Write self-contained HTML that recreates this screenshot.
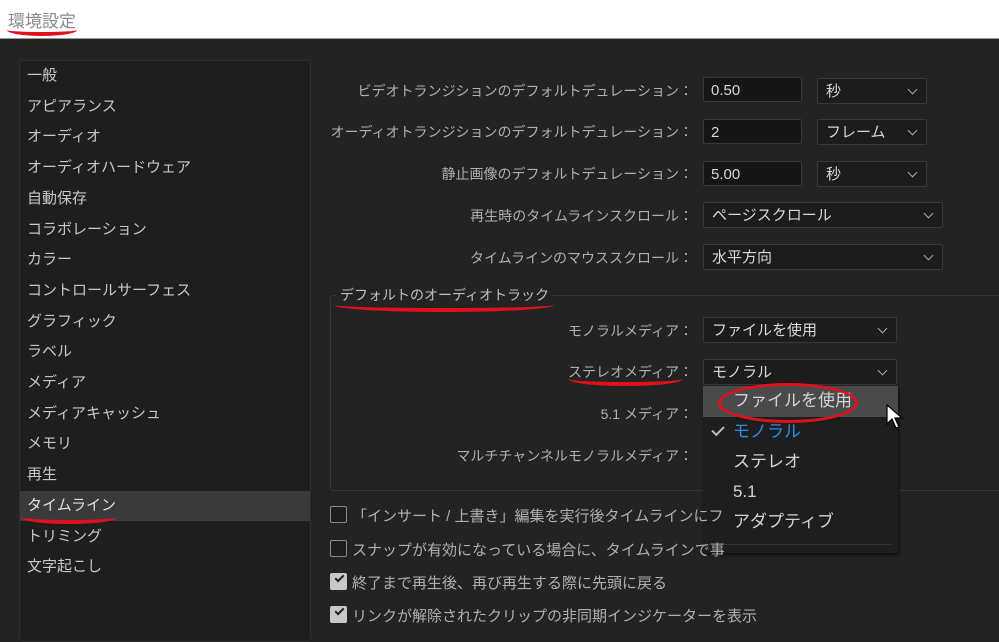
<!DOCTYPE html>
<html><head><meta charset="utf-8"><style>
body{margin:0;width:999px;height:632px;background:#232323;overflow:hidden;position:relative;font-family:"Liberation Sans","Noto Sans CJK JP",sans-serif;font-size:15px;color:#c8c8c8}
.a{position:absolute;white-space:nowrap}
.top{left:0;top:0;width:999px;height:38px;background:#fff;border-bottom:1px solid #999}
.lp{left:19px;top:60px;width:290px;height:580px;background:#1e1e1e;border:1px solid #2e2e2e;border-radius:3px}
.li{position:absolute;left:7px;height:30px;line-height:30px;width:283px}
.lbl{right:306px;text-align:right;color:#b0b0b0;font-size:14px}
.in{background:#161616;border:1px solid #383838;border-radius:2px;height:25px;line-height:25px;padding-left:7px;box-sizing:border-box;color:#d8d8d8}
.dd{background:#1c1c1c;border:1px solid #383838;border-radius:2px;height:26px;line-height:25px;padding-left:8px;box-sizing:border-box;color:#d8d8d8}
.dd:after{content:"";position:absolute;right:10px;top:7px;width:6px;height:6px;border-right:1.3px solid #aaa;border-bottom:1.3px solid #aaa;transform:rotate(45deg)}
.cb{width:15px;height:15px;border:1.5px solid #8a8a8a;border-radius:2px;background:#1e1e1e;left:330px}
.cb.c{background:#c8c8c8;border-color:#c8c8c8}
.red{position:absolute;border-bottom:4px solid #e0101c;border-radius:50%}
.mi{position:absolute;left:30px;height:30px;line-height:30px;font-size:17px;color:#d4d4d4}
.ct{left:352px;color:#b0b0b0}
</style></head><body>
<div class="a top"></div>
<div class="a" style="left:8px;top:7px;font-size:17px;color:#8a8a8a">環境設定</div>
<div class="red" style="left:7px;top:24px;width:70px;height:8px"></div>

<div class="a lp">
<div class="li" style="top:0">一般</div>
<div class="li" style="top:31px">アピアランス</div>
<div class="li" style="top:61px">オーディオ</div>
<div class="li" style="top:92px">オーディオハードウェア</div>
<div class="li" style="top:123px">自動保存</div>
<div class="li" style="top:154px">コラボレーション</div>
<div class="li" style="top:184px">カラー</div>
<div class="li" style="top:215px">コントロールサーフェス</div>
<div class="li" style="top:246px">グラフィック</div>
<div class="li" style="top:276px">ラベル</div>
<div class="li" style="top:307px">メディア</div>
<div class="li" style="top:338px">メディアキャッシュ</div>
<div class="li" style="top:368px">メモリ</div>
<div class="li" style="top:399px">再生</div>
<div class="li" style="top:430px;left:0;padding-left:7px;background:#3a3a3a;color:#e0e0e0">タイムライン</div>
<div class="li" style="top:461px">トリミング</div>
<div class="li" style="top:491px">文字起こし</div>
</div>
<div class="red" style="left:20px;top:510px;width:98px;height:10px"></div>

<div class="a lbl" style="top:81px">ビデオトランジションのデフォルトデュレーション：</div>
<div class="a in" style="left:703px;top:77px;width:99px">0.50</div>
<div class="a dd" style="left:817px;top:78px;width:110px">秒</div>
<div class="a lbl" style="top:122px">オーディオトランジションのデフォルトデュレーション：</div>
<div class="a in" style="left:703px;top:119px;width:99px">2</div>
<div class="a dd" style="left:817px;top:119px;width:110px">フレーム</div>
<div class="a lbl" style="top:164px">静止画像のデフォルトデュレーション：</div>
<div class="a in" style="left:703px;top:161px;width:99px">5.00</div>
<div class="a dd" style="left:817px;top:161px;width:110px">秒</div>
<div class="a lbl" style="top:206px">再生時のタイムラインスクロール：</div>
<div class="a dd" style="left:703px;top:202px;width:240px">ページスクロール</div>
<div class="a lbl" style="top:248px">タイムラインのマウススクロール：</div>
<div class="a dd" style="left:703px;top:244px;width:240px">水平方向</div>

<div class="a" style="left:330px;top:295px;width:680px;height:194px;border:1px solid #363636;border-radius:3px"></div>
<div class="a" style="left:336px;top:285px;padding:0 4px;background:#232323;color:#c0c0c0;font-size:14px">デフォルトのオーディオトラック</div>
<div class="red" style="left:334px;top:298px;width:220px;height:10px"></div>

<div class="a lbl" style="top:321px">モノラルメディア：</div>
<div class="a dd" style="left:703px;top:317px;width:194px">ファイルを使用</div>
<div class="a lbl" style="top:362px">ステレオメディア：</div>
<div class="red" style="left:568px;top:372px;width:115px;height:10px"></div>
<div class="a dd" style="left:703px;top:359px;width:194px">モノラル</div>
<div class="a lbl" style="top:404px">5.1 メディア：</div>
<div class="a lbl" style="top:446px">マルチチャンネルモノラルメディア：</div>

<div class="a" style="left:703px;top:386px;width:195px;height:167px;background:#1e1e1e;box-shadow:1px 2px 3px rgba(0,0,0,.6)">
<div style="position:absolute;left:0;top:0;width:195px;height:31px;background:#4a4a4a"></div>
<div class="mi" style="top:0">ファイルを使用</div>
<div class="a" style="left:9px;top:40px;width:10px;height:5px;border-left:2px solid #bbb;border-bottom:2px solid #bbb;transform:rotate(-45deg)"></div>
<div class="mi" style="top:31px;color:#2d8ceb">モノラル</div>
<div class="mi" style="top:61px">ステレオ</div>
<div class="mi" style="top:91px">5.1</div>
<div class="mi" style="top:121px">アダプティブ</div>
<div style="position:absolute;left:4px;top:158px;width:185px;height:1px;background:#333"></div>
</div>
<div class="a" style="left:718px;top:383px;width:134px;height:34px;border:3px solid #e0101c;border-radius:50%"></div>
<svg class="a" style="left:886px;top:404px" width="20" height="28" viewBox="0 0 20 28"><path d="M1 1 L1 20 L6 15 L10 24 L13 23 L9 14 L16 14 Z" fill="#fff" stroke="#000" stroke-width="1.2"/></svg>

<div class="a cb" style="top:506px"></div>
<div class="a ct" style="top:505px">「インサート / 上書き」編集を実行後タイムラインにフ</div>
<div class="a cb" style="top:540px"></div>
<div class="a ct" style="top:539px">スナップが有効になっている場合に、タイムラインで事</div>
<div class="a cb c" style="top:573px"></div>
<div class="a" style="left:335px;top:575px;width:7px;height:3px;border-left:2px solid #222;border-bottom:2px solid #222;transform:rotate(-45deg)"></div>
<div class="a ct" style="top:572px">終了まで再生後、再び再生する際に先頭に戻る</div>
<div class="a cb c" style="top:606px"></div>
<div class="a" style="left:335px;top:608px;width:7px;height:3px;border-left:2px solid #222;border-bottom:2px solid #222;transform:rotate(-45deg)"></div>
<div class="a ct" style="top:605px">リンクが解除されたクリップの非同期インジケーターを表示</div>
</body></html>
